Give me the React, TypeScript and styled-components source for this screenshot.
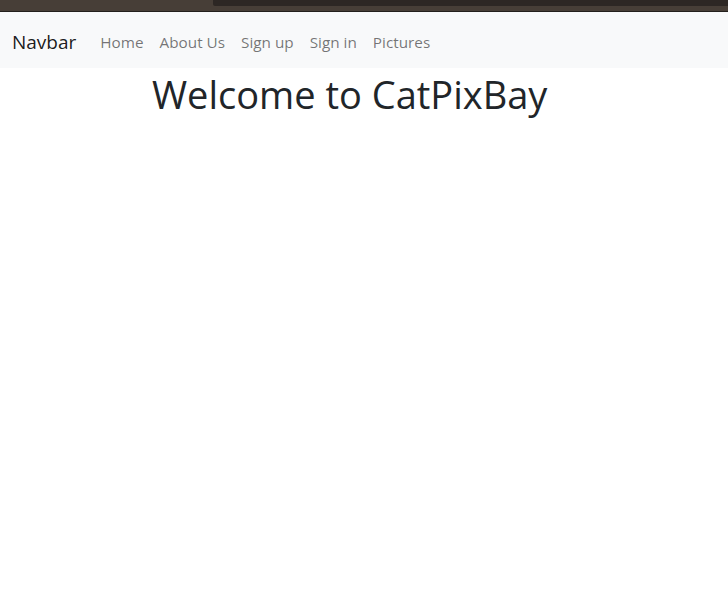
import React from "react";
import styled, { createGlobalStyle } from "styled-components";

const Global = createGlobalStyle`
  html, body { margin: 0; padding: 0; background: #fff; }
  body { font-family: "Open Sans", "Noto Sans", sans-serif; color: #212529; }
`;

const Chrome = styled.div`
  height: 11px;
  background: #473e37;
  border-bottom: 1px solid #231f1c;
  display: flex;
  justify-content: flex-end;
`;

const ChromeInset = styled.div`
  width: 515px;
  height: 6px;
  background: #2d2724;
  border-bottom-left-radius: 2px;
`;

const Nav = styled.nav`
  height: 56px;
  box-sizing: border-box;
  background: #f8f9fa;
  display: flex;
  align-items: center;
  padding: 3px 12px 0;
`;

const Brand = styled.a`
  font-size: 19px;
  color: rgba(0, 0, 0, 0.9);
  margin-right: 16px;
  text-decoration: none;
`;

const Links = styled.div`
  display: flex;
  align-items: center;
`;

const Link = styled.a`
  font-size: 15.3px;
  color: rgba(0, 0, 0, 0.55);
  padding: 0 8px;
  text-decoration: none;
`;

const Title = styled.h1`
  margin: 0;
  padding: 4px 0 0 152px;
  font-size: 38px;
  font-weight: 400;
  line-height: 1.2;
  color: #212529;
`;

export default function App() {
  return (
    <>
      <Global />
      <Chrome>
        <ChromeInset />
      </Chrome>
      <Nav>
        <Brand href="#">Navbar</Brand>
        <Links>
          <Link href="#">Home</Link>
          <Link href="#">About Us</Link>
          <Link href="#">Sign up</Link>
          <Link href="#">Sign in</Link>
          <Link href="#">Pictures</Link>
        </Links>
      </Nav>
      <Title>Welcome to CatPixBay</Title>
    </>
  );
}
